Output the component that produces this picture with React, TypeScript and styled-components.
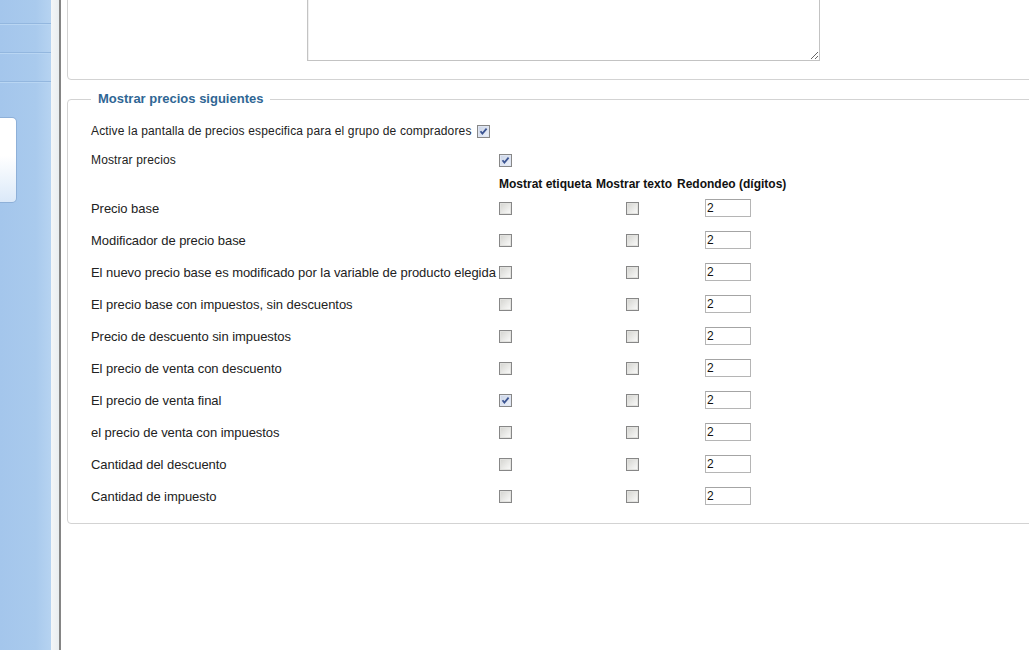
import styled, { createGlobalStyle } from "styled-components";

const GlobalStyle = createGlobalStyle`
	html, body {
		margin: 0;
		padding: 0;
		overflow: hidden;
		background: #ffffff;
	}
	body {
		font-family: "Liberation Sans", Arial, sans-serif;
		font-size: 12px;
		color: #222222;
	}
`;

const priceRows: { label: string; showLabel: boolean }[] = [
	{ label: "Precio base", showLabel: false },
	{ label: "Modificador de precio base", showLabel: false },
	{ label: "El nuevo precio base es modificado por la variable de producto elegida", showLabel: false },
	{ label: "El precio base con impuestos, sin descuentos", showLabel: false },
	{ label: "Precio de descuento sin impuestos", showLabel: false },
	{ label: "El precio de venta con descuento", showLabel: false },
	{ label: "El precio de venta final", showLabel: true },
	{ label: "el precio de venta con impuestos", showLabel: false },
	{ label: "Cantidad del descuento", showLabel: false },
	{ label: "Cantidad de impuesto", showLabel: false },
];

const Page = styled.div`
	display: flex;
	height: 650px;
	width: 1029px;
	overflow: hidden;
`;

const Sidebar = styled.aside`
	width: 51px;
	flex-shrink: 0;
	background: linear-gradient(to right, #a4c6ec 0%, #a9caed 70%, #b6d3f1 100%);
	display: flex;
	flex-direction: column;
`;

const SideItem = styled.div<{ $h: number }>`
	height: ${(p) => p.$h}px;
	border-bottom: 1px solid #93b7df;
	box-shadow: 0 1px 0 #b9d6f3;
`;

const SideCard = styled.div`
	margin-top: 35px;
	width: 16px;
	height: 84px;
	border: 1px solid #8eb0d8;
	border-left: none;
	border-radius: 0 5px 5px 0;
	background: linear-gradient(to bottom, #ffffff 0%, #ffffff 45%, #dbe9f9 100%);
`;

const Splitter = styled.div`
	width: 8px;
	flex-shrink: 0;
	background: linear-gradient(to right, #f4f6f8, #e9edf0);
	border-right: 2px solid #858585;
`;

const Main = styled.main`
	flex: 1;
	min-width: 0;
	overflow: hidden;
	padding-left: 6px;
`;

const Inner = styled.div`
	width: 1000px;
`;

const Fieldset = styled.fieldset`
	margin: 0;
	border: 1px solid #d3d3d3;
	border-radius: 4px;
	padding: 0 10px 11px 23px;
	min-width: 0;
	background: #ffffff;
`;

const TopFieldset = styled(Fieldset)`
	margin-top: -80px;
	padding-top: 0;
	padding-bottom: 18px;
`;

const PriceFieldset = styled(Fieldset)`
	margin-top: 11px;
	padding-top: 12px;
`;

const Legend = styled.legend`
	padding: 0 7px;
	font-size: 13px;
	font-weight: bold;
	color: #2f6694;
	line-height: 16px;
`;

const FormRow = styled.div`
	display: grid;
	grid-template-columns: 216px auto;
`;

const TextArea = styled.textarea`
	width: 513px;
	height: 140px;
	box-sizing: border-box;
	border: 1px solid #c3c3c3;
	box-shadow: inset 1px 1px 0 #f0f0f0;
	margin: 0;
	display: block;
	font-family: inherit;
`;

const ToggleRow = styled.div`
	display: flex;
	align-items: center;
	height: 24px;
	gap: 5px;
	letter-spacing: 0.15px;
`;

const Table = styled.table`
	border-collapse: collapse;
	table-layout: fixed;
	width: 696px;
	margin-top: 1px;

	td,
	th {
		padding: 0;
		white-space: nowrap;
		vertical-align: middle;
	}
`;

const Row = styled.tr<{ $h: number }>`
	height: ${(p) => p.$h}px;
`;

const LabelCell = styled.td<{ $big?: boolean }>`
	font-size: ${(p) => (p.$big ? 13 : 12)}px;
	letter-spacing: ${(p) => (p.$big ? -0.05 : 0.15)}px;
`;

const HeadCell = styled.th`
	text-align: left;
	font-weight: bold;
	color: #111111;
	line-height: 14px;
`;

const Cell = styled.td<{ $pad?: number }>`
	line-height: 0;
	padding-left: ${(p) => p.$pad || 0}px !important;
`;

const Box = styled.span<{ $checked?: boolean }>`
	display: inline-block;
	width: 11px;
	height: 11px;
	border: 1px solid #878787;
	background: ${(p) =>
		p.$checked
			? "linear-gradient(135deg, #c9d3e6 0%, #eef2fa 100%)"
			: "linear-gradient(135deg, #d3d3cf 0%, #f0f0ee 70%, #fbfbfb 100%)"};
	box-shadow: inset 0 0 0 1px ${(p) => (p.$checked ? "#dfe5f2" : "#e2e2df")};
	vertical-align: middle;

	svg {
		display: block;
	}
`;

const NumberInput = styled.input`
	width: 46px;
	height: 18px;
	box-sizing: border-box;
	border: 1px solid #b5b5b5;
	border-top-color: #a4a4a4;
	padding: 0 1px;
	margin: 0;
	font-family: "Liberation Sans", Arial, sans-serif;
	font-size: 12px;
	color: #111111;
	vertical-align: middle;
`;

const Checkbox = ({ checked = false }: { checked?: boolean }) => (
	<Box $checked={checked}>
		{checked && (
			<svg width="11" height="11" viewBox="0 0 11 11">
				<path
					d="M2.5 5.2 L4.4 7.6 L8.6 2.6"
					fill="none"
					stroke="#3b5492"
					strokeWidth="1.8"
				/>
			</svg>
		)}
	</Box>
);

export default function App() {
	return (
		<Page>
			<GlobalStyle />
			<Sidebar>
				<SideItem $h={23} />
				<SideItem $h={28} />
				<SideItem $h={28} />
				<SideCard />
			</Sidebar>
			<Splitter />
			<Main>
				<Inner>
					<TopFieldset>
						<FormRow>
							<span />
							<TextArea defaultValue="" />
						</FormRow>
					</TopFieldset>
					<PriceFieldset>
						<Legend>Mostrar precios siguientes</Legend>
						<ToggleRow>
							<span>Active la pantalla de precios especifica para el grupo de compradores</span>
							<Checkbox checked />
						</ToggleRow>
						<Table>
							<colgroup>
								<col style={{ width: 408 }} />
								<col style={{ width: 97 }} />
								<col style={{ width: 81 }} />
								<col style={{ width: 110 }} />
							</colgroup>
							<tbody>
								<Row $h={32}>
									<LabelCell>Mostrar precios</LabelCell>
									<Cell>
										<Checkbox checked />
									</Cell>
									<Cell />
									<Cell />
								</Row>
								<Row $h={16}>
									<LabelCell />
									<HeadCell>Mostrat etiqueta</HeadCell>
									<HeadCell>Mostrar texto</HeadCell>
									<HeadCell>Redondeo (dígitos)</HeadCell>
								</Row>
								{priceRows.map((row) => (
									<Row $h={32} key={row.label}>
										<LabelCell $big>{row.label}</LabelCell>
										<Cell>
											<Checkbox checked={row.showLabel} />
										</Cell>
										<Cell $pad={30}>
											<Checkbox />
										</Cell>
										<Cell $pad={28}>
											<NumberInput defaultValue="2" />
										</Cell>
									</Row>
								))}
							</tbody>
						</Table>
					</PriceFieldset>
				</Inner>
			</Main>
		</Page>
	);
}
